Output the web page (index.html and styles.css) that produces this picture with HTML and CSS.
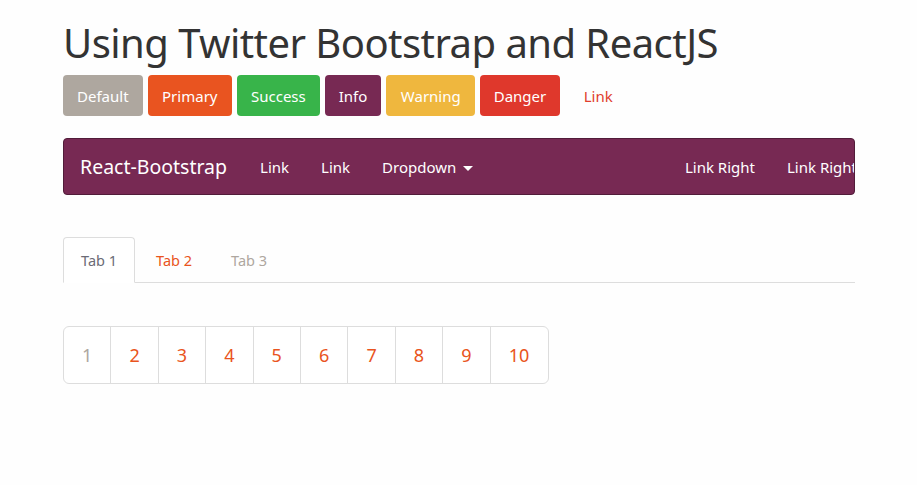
FILE: index.html
```html
<!DOCTYPE html>
<html lang="en">
<head>
    <meta charset="UTF-8">
    <title>React-Bootstrap</title>
    <link rel="stylesheet" href="styles.css">
</head>
<body>
    <div class="container">
        <h1>Using Twitter Bootstrap and ReactJS</h1>
        <div class="btn-row">
            <button class="btn btn-default">Default</button>
            <button class="btn btn-primary">Primary</button>
            <button class="btn btn-success">Success</button>
            <button class="btn btn-info">Info</button>
            <button class="btn btn-warning">Warning</button>
            <button class="btn btn-danger">Danger</button>
            <button class="btn btn-link">Link</button>
        </div>

        <nav class="navbar">
            <a class="brand" href="#">React-Bootstrap</a>
            <ul class="nav-links">
                <li><a href="#">Link</a></li>
                <li><a href="#">Link</a></li>
                <li><a href="#">Dropdown <span class="caret"></span></a></li>
            </ul>
            <ul class="nav-links nav-right">
                <li><a href="#">Link Right</a></li>
                <li><a href="#">Link Right</a></li>
            </ul>
        </nav>

        <ul class="tabs">
            <li class="tab active">Tab 1</li>
            <li class="tab">Tab 2</li>
            <li class="tab disabled">Tab 3</li>
        </ul>

        <ul class="pagination">
            <li class="active">1</li>
            <li>2</li>
            <li>3</li>
            <li>4</li>
            <li>5</li>
            <li>6</li>
            <li>7</li>
            <li>8</li>
            <li>9</li>
            <li>10</li>
        </ul>
    </div>
</body>
</html>
```

FILE: styles.css
```css
body {
    margin: 0;
    padding: 0;
    background-color: #fefefe;
    font-family: "Noto Sans", "Open Sans", sans-serif;
    color: #333333;
}
.container {
    width: 792px;
    margin-left: 63px;
}
h1 {
    font-size: 40px;
    font-weight: 400;
    line-height: 46px;
    margin: 20px 0 9px;
    letter-spacing: -0.55px;
}
.btn-row {
    display: flex;
    gap: 5px;
}
.btn {
    height: 41px;
    padding: 0 14px;
    border: none;
    border-radius: 4px;
    font-family: inherit;
    font-size: 15px;
    color: #ffffff;
    cursor: pointer;
}
.btn-default { background-color: #aea79f; }
.btn-primary { background-color: #e95420; padding: 0 14.5px; }
.btn-success { background-color: #38b44a; }
.btn-info { background-color: #772953; }
.btn-warning { background-color: #efb73e; padding: 0 14.5px; }
.btn-danger { background-color: #df382c; padding: 0 13.5px; }
.btn-link {
    background: none;
    color: #e03e2e;
    padding: 0 19px;
}
.navbar {
    display: flex;
    align-items: center;
    height: 55px;
    margin-top: 22px;
    background-color: #772953;
    border: 1px solid #511c39;
    border-radius: 4px;
    overflow: hidden;
}
.brand {
    color: #ffffff;
    text-decoration: none;
    font-size: 19.5px;
    padding: 0 17px 0 16px;
}
.nav-links {
    display: flex;
    list-style: none;
    margin: 0;
    padding: 0;
}
.nav-links a {
    display: block;
    color: #ffffff;
    text-decoration: none;
    font-size: 15px;
    padding: 0 16px;
    white-space: nowrap;
}
.nav-right {
    margin-left: auto;
    margin-right: -19px;
}
.caret {
    display: inline-block;
    width: 0;
    height: 0;
    margin-left: 3px;
    vertical-align: middle;
    border-top: 5px solid #ffffff;
    border-left: 5px solid transparent;
    border-right: 5px solid transparent;
}
.tabs {
    display: flex;
    list-style: none;
    margin: 42px 0 0;
    padding: 0;
    border-bottom: 1px solid #dddddd;
}
.tab {
    height: 44px;
    line-height: 44px;
    padding: 0 17px;
    margin-right: 3px;
    margin-bottom: -1px;
    font-size: 14.5px;
    color: #e95420;
    border: 1px solid transparent;
    border-radius: 4px 4px 0 0;
}
.tab.active {
    color: #6b6b75;
    background-color: #ffffff;
    border-color: #dddddd;
    border-bottom-color: #ffffff;
}
.tab.disabled {
    color: #aea79f;
}
.pagination {
    display: inline-flex;
    list-style: none;
    margin: 43px 0 0;
    padding: 0;
    border: 1px solid #dddddd;
    border-radius: 6px;
    background-color: #ffffff;
}
.pagination li {
    width: 46.4px;
    height: 56px;
    line-height: 56px;
    text-align: center;
    font-size: 18px;
    color: #e95420;
    border-left: 1px solid #dddddd;
}
.pagination li:first-child {
    border-left: none;
}
.pagination li:last-child {
    width: 57px;
}
.pagination li.active {
    color: #aea79f;
}
```
